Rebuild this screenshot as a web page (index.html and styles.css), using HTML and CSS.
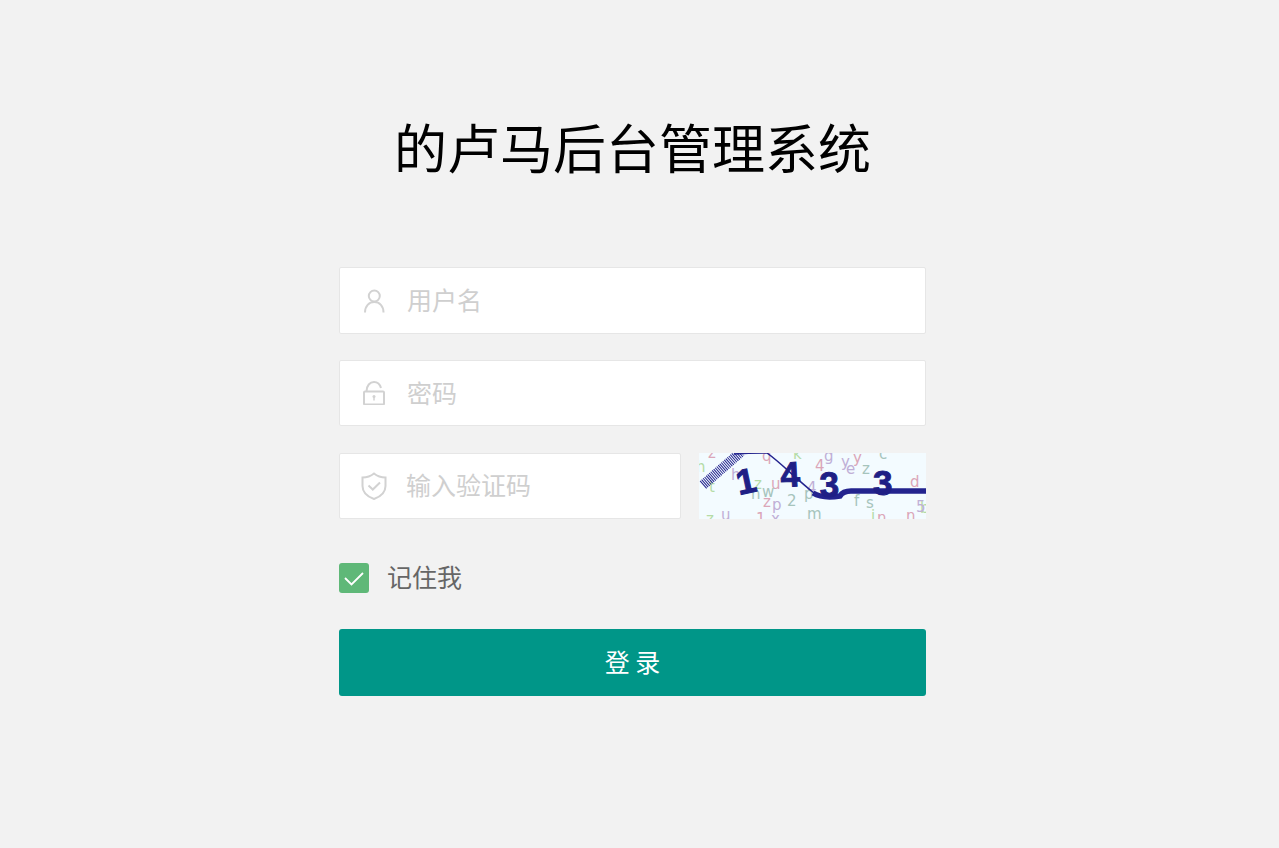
FILE: index.html
```html
<!DOCTYPE html>
<html lang="zh-CN">
<head>
<meta charset="utf-8">
<title>的卢马后台管理系统</title>
<link rel="stylesheet" href="styles.css">
</head>
<body>
<main class="login">
  <h1 class="title">的卢马后台管理系统</h1>
  <form class="form">
    <label class="field field-first">
      <svg class="icon" viewBox="0 0 24 24"><circle cx="12.300" cy="7" r="5.500"/><path d="M3 23.500C3 17 7 13 12.300 13S21.500 17 21.500 23.500"/></svg>
      <input class="input" placeholder="用户名">
    </label>
    <label class="field field-pw">
      <svg class="icon" viewBox="0 0 24 24"><rect x="2" y="10.500" width="20" height="13" rx="1"/><path d="M4.500 10.500C4.500 4.500 8 1 12 1C15.500 1 18 3.500 19 7"/><circle class="dot" cx="12" cy="15.500" r="1.500"/><path class="key" d="M12 16v3.500"/></svg>
      <input class="input input-pw" placeholder="密码">
    </label>
    <div class="code-row">
      <label class="field field-code">
        <svg class="icon icon-shield" viewBox="0 0 26 28"><path d="M13 1.500C16 4 20 5.500 24.500 5.500V14c0 6-4.500 10.500-11.500 13C6 24.500 1.500 20 1.500 14V5.500C6 5.500 10 4 13 1.500Z"/><path d="M7.500 13.500 11.800 17.500 19 10.500"/></svg>
        <input class="input" placeholder="输入验证码">
      </label>
      <svg class="captcha" viewBox="0 0 227 66" aria-label="验证码 1433">
        <rect class="cap-bg" width="227" height="66"/>
        <g class="noise-pink">
          <text x="9" y="5">z</text><text x="63" y="8">q</text><text x="116" y="18">4</text><text x="154" y="10">y</text><text x="72" y="36">u</text><text x="64" y="54">z</text><text x="211" y="34">d</text><text x="207" y="68">n</text><text x="178" y="70">n</text><text x="57" y="71">1</text>
        </g>
        <g class="noise-green">
          <text x="-3" y="19">h</text><text x="10" y="39">t</text><text x="94" y="6">k</text><text x="55" y="36">z</text><text x="172" y="68">i</text><text x="221" y="60">b</text><text x="7" y="71">z</text>
        </g>
        <g class="noise-lav">
          <text x="32" y="27">h</text><text x="125" y="8">g</text><text x="142" y="14">y</text><text x="147" y="21">e</text><text x="108" y="40">4</text><text x="73" y="57">p</text><text x="217" y="59">5</text><text x="22" y="67">u</text><text x="72" y="71">x</text>
        </g>
        <g class="noise-teal">
          <text x="163" y="21">z</text><text x="180" y="6">c</text><text x="52" y="46">n</text><text x="63" y="44">w</text><text x="88" y="53">2</text><text x="105" y="46">p</text><text x="155" y="53">f</text><text x="167" y="55">s</text><text x="108" y="66">m</text>
        </g>
        <path class="cap-hatch" d="M4 32 42 -1"/>
        <path class="cap-thin" d="M35 1Q50 0 68 0C82 10 95 24 115 40"/>
        <path class="cap-thick" d="M114 40Q124 46 141 43Q144 38 152 38L227 38"/>
        <g class="cap-digits">
          <text transform="translate(40 42) rotate(-12)">1</text>
          <text transform="translate(82 34) rotate(-3)">4</text>
          <text transform="translate(121 44) rotate(-2)">3</text>
          <text transform="translate(174 42)">3</text>
        </g>
      </svg>
    </div>
    <label class="remember">
      <span class="check"><svg class="check-mark" viewBox="0 0 30 30"><path d="M6 15 12.500 21.500 24 10"/></svg></span>
      <span class="remember-text">记住我</span>
    </label>
    <button class="submit" type="button">登 录</button>
  </form>
</main>
</body>
</html>
```
FILE: styles.css
```css
* { box-sizing: border-box; }
html, body { margin: 0; height: 100%; }
body {
  background: #f2f2f2;
  font-family: "Noto Sans CJK SC", "Liberation Sans", sans-serif;
  overflow: hidden;
}
.login {
  width: 587px;
  margin-left: 339px;
  padding-top: 109px;
}
.title {
  margin: 0 0 83px;
  height: 75px;
  font-size: 53px;
  line-height: 75px;
  font-weight: 400;
  color: #000;
  text-align: center;
  white-space: nowrap;
}
.form { display: flex; flex-direction: column; }
.field {
  display: flex;
  align-items: center;
  height: 66px;
  background: #fff;
  border: 1px solid #e6e6e6;
  border-radius: 2px;
}
.field-first { height: 67px; margin-bottom: 26px; }
.field-pw { margin-bottom: 27px; }
.icon {
  flex: none;
  width: 24px;
  height: 24px;
  margin-left: 22px;
  margin-right: 21px;
  fill: none;
  stroke: #d2d2d2;
  stroke-width: 2;
}
.icon-shield { width: 26px; height: 28px; margin-left: 21px; margin-right: 19px; }
.dot { fill: #d2d2d2; stroke: none; }
.key { stroke-width: 1.500; }
.input {
  flex: 1;
  min-width: 0;
  height: 100%;
  border: 0;
  outline: 0;
  padding: 0 0 4px;
  background: transparent;
  font: 25px "Noto Sans CJK SC", sans-serif;
  color: #333;
}
.input-pw { padding-bottom: 2px; }
.input::placeholder { color: #cfcfcf; opacity: 1; }
.code-row { display: flex; justify-content: space-between; height: 66px; }
.field-code { width: 342px; }
.captcha { display: block; width: 227px; height: 66px; }
.cap-bg { fill: #f3fbff; }
.cap-hatch { fill: none; stroke: #23238e; stroke-width: 10; stroke-dasharray: 1 1; }
.cap-thin { fill: none; stroke: #23238e; stroke-width: 1.500; }
.cap-thick { fill: none; stroke: #23238e; stroke-width: 5.500; }
.captcha text { font-family: "DejaVu Sans", sans-serif; font-size: 15px; }
.noise-pink { fill: #dba6b8; }
.noise-green { fill: #b5dba6; }
.noise-lav { fill: #c0afd6; }
.noise-teal { fill: #a6c4bc; }
.captcha .cap-digits text {
  fill: #1f1f85;
  stroke: #1f1f85;
  stroke-width: 1;
  font-family: "Liberation Sans", sans-serif;
  font-size: 35px;
  font-weight: 700;
}
.remember {
  display: flex;
  align-items: center;
  height: 30px;
  margin-top: 44px;
}
.check {
  flex: none;
  display: block;
  width: 30px;
  height: 30px;
  margin-right: 18px;
  background: #5fb878;
  border-radius: 3px;
}
.check-mark { display: block; width: 30px; height: 30px; fill: none; stroke: #fff; stroke-width: 1.800; }
.remember-text { font-size: 25px; line-height: 26px; height: 30px; color: #666; }
.submit {
  display: block;
  width: 100%;
  height: 67px;
  margin-top: 36px;
  padding: 0 0 4px;
  border: 0;
  border-radius: 3px;
  background: #009688;
  color: #fff;
  font: 25px "Noto Sans CJK SC", sans-serif;
}
```
